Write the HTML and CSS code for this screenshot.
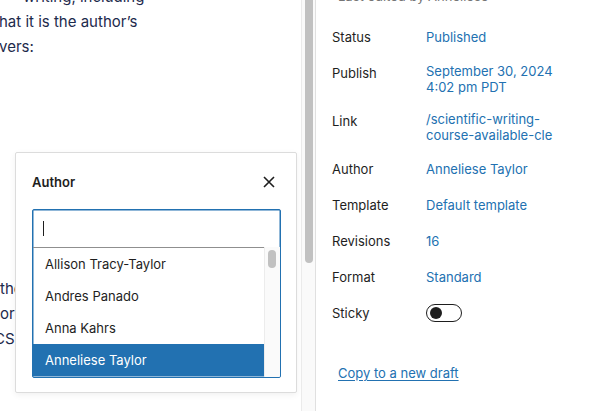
FILE: index.html
```html
<!DOCTYPE html>
<html>
<head>
<meta charset="utf-8">
<link rel="stylesheet" href="styles.css">
</head>
<body>
<div class="app">
  <main class="editor">
    <div class="para top">
      <div class="line l1">writing, including</div>
      <div class="line l2">hat it is the author’s</div>
      <div class="line l2">vers:</div>
    </div>
    <div class="para bottom">
      <div class="line">the</div>
      <div class="line">ork</div>
      <div class="line l3">CSF</div>
    </div>

    <div class="popover">
      <div class="pop-head">
        <span class="pop-title">Author</span>
        <svg class="close" width="24" height="24" viewBox="0 0 24 24"><path d="M7 7 L17 17 M17 7 L7 17" stroke="#1e1e1e" stroke-width="1.6" fill="none"/></svg>
      </div>
      <div class="combo">
        <div class="combo-input"><span class="caret"></span></div>
        <div class="combo-list">
          <ul class="options">
            <li>Allison Tracy-Taylor</li>
            <li>Andres Panado</li>
            <li>Anna Kahrs</li>
            <li class="selected">Anneliese Taylor</li>
          </ul>
          <div class="list-scroll"><span class="list-thumb"></span></div>
        </div>
      </div>
    </div>
  </main>
  <div class="scrollbar"><span class="thumb"></span></div>
  <aside class="sidebar">
    <div class="meta">Last edited by Anneliese</div>
    <div class="rows">
      <div class="row"><span class="label">Status</span><span class="value">Published</span></div>
      <div class="row"><span class="label">Publish</span><span class="value">September 30, 2024<br>4:02 pm PDT</span></div>
      <div class="row"><span class="label">Link</span><span class="value">/scientific-writing-<br>course-available-cle</span></div>
      <div class="row"><span class="label">Author</span><span class="value">Anneliese Taylor</span></div>
      <div class="row"><span class="label">Template</span><span class="value">Default template</span></div>
      <div class="row"><span class="label">Revisions</span><span class="value">16</span></div>
      <div class="row"><span class="label">Format</span><span class="value">Standard</span></div>
      <div class="row"><span class="label">Sticky</span><span class="value"><span class="toggle"><span class="knob"></span></span></span></div>
    </div>
    <a class="copy" href="#">Copy to a new draft</a>
  </aside>
</div>
</body>
</html>
```

FILE: styles.css
```css
* { box-sizing: border-box; }
html, body { margin: 0; padding: 0; background: #fff; }
body { font-family: Inter, "Noto Sans", sans-serif; color: #1e1e1e; }

.app { display: flex; width: 590px; height: 411px; overflow: hidden; }

.editor { position: relative; width: 301px; height: 411px; overflow: hidden; flex: none; }
.para { font-size: 15px; line-height: 25px; color: #1d2a4c; white-space: nowrap; }
.para.top { margin-top: -16px; }
.para .l1 { padding-left: 23px; }
.para .l2 { margin-left: -1px; }
.para .l3 { margin-left: -6px; }
.para.bottom { margin-top: 217px; }

.scrollbar { width: 15px; flex: none; background: #fafafa; border-left: 1px solid #ebebeb; border-right: 1px solid #e0e0e0; position: relative; }
.scrollbar .thumb { position: absolute; left: 3px; top: -10px; width: 8px; height: 273px; border-radius: 4px; background: #c1c1c1; }

.sidebar { flex: 1; padding-left: 16px; font-size: 13px; min-width: 0; }
.meta { margin-top: -12px; height: 16px; line-height: 16px; color: #757575; padding-left: 6px; white-space: nowrap; overflow: hidden; }
.rows { margin-top: 23px; display: flex; flex-direction: column; gap: 16px; }
.row { display: flex; align-items: flex-start; }
.label { width: 94px; flex: none; line-height: 20px; }
.value { min-height: 20px; display: flex; align-items: center; line-height: 16px; color: #2271b1; }
.toggle { width: 36px; height: 18px; border: 1px solid #1e1e1e; border-radius: 9px; position: relative; display: block; }
.knob { position: absolute; left: 3px; top: 2px; width: 12px; height: 12px; border-radius: 50%; background: #1e1e1e; }
.copy { display: inline-block; margin-top: 42px; margin-left: 6px; line-height: 16px; color: #2271b1; text-decoration: underline; text-underline-offset: 2px; }

.popover { position: absolute; left: 15px; top: 152px; width: 282px; height: 241px; background: #fff; border: 1px solid #dcdcdc; border-radius: 2px; box-shadow: 0 2px 6px rgba(0,0,0,0.06); padding: 16px 16px 0 16px; }
.pop-head { display: flex; justify-content: space-between; align-items: center; height: 26px; }
.pop-title { font-size: 13px; font-weight: 600; }
.close { margin-right: -1px; }
.combo { margin-top: 14px; width: 249px; height: 169px; border: 1px solid #2271b1; border-radius: 2px; box-shadow: inset 0 0 0 0.5px #2271b1; display: flex; flex-direction: column; overflow: hidden; }
.combo-input { height: 37px; flex: none; padding: 11px 0 0 10px; }
.caret { display: block; width: 1px; height: 15px; background: #1e1e1e; }
.combo-list { flex: 1; display: flex; min-height: 0; }
.options { list-style: none; margin: 0; padding: 0; flex: 1; border-top: 1px solid #8f8f8f; font-size: 13px; }
.options li { height: 32px; line-height: 32px; padding-left: 12px; }
.options li.selected { background: #2271b1; color: #fff; }
.list-scroll { width: 16px; flex: none; background: #fafafa; border-left: 1px solid #ececec; position: relative; }
.list-thumb { position: absolute; left: 3px; top: 3px; width: 8px; height: 18px; border-radius: 4px; background: #c1c1c1; }
```
